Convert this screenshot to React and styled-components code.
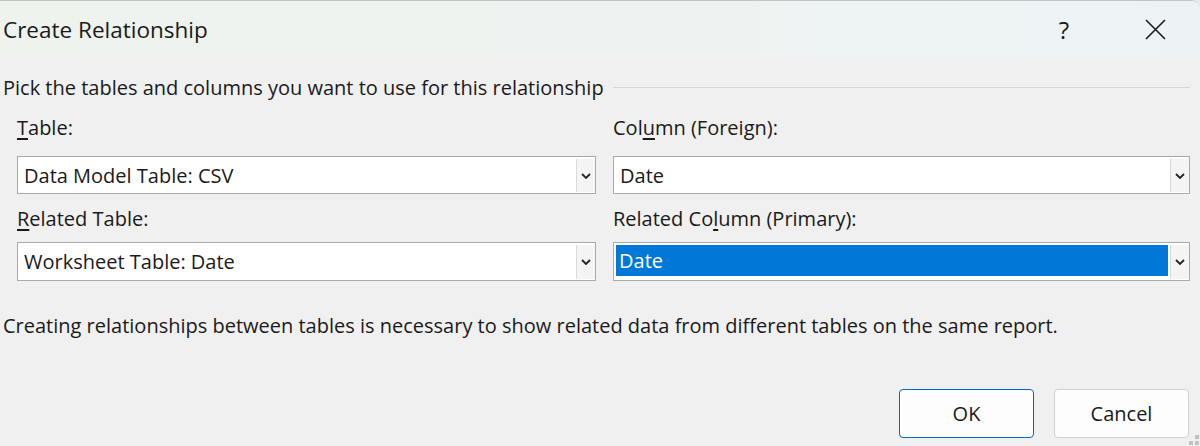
import React from 'react'
import styled, { createGlobalStyle } from 'styled-components';

const Global = createGlobalStyle`
    html, body {
        margin:0;
        padding:0;
        background:#e9e9e9;
    }
    body{
        font-family: 'Open Sans', 'Noto Sans', sans-serif;
        color:#1a1a1a;
    }
`;

const Dialog = styled.div`
    width:1200px;
    height:446px;
    box-sizing:border-box;
    background:#f0f0f0;
    border-top:1px solid #c4c4c4;
    border-top-right-radius:9px;
    overflow:hidden;
    display:flex;
    flex-direction:column;
`;

const TitleBar = styled.div`
    height:55px;
    flex:none;
    display:flex;
    align-items:center;
    background:linear-gradient(90deg, #eef3ee 0%, #eef3f1 50%, #edf3f5 100%);
`;

const Title = styled.div`
    flex:1;
    padding-left:3px;
    font-size:22.5px;
    color:#1b1b1b;
    margin-top:2px;
`;

const TitleButton = styled.div`
    width:${props => props.$w}px;
    margin-right:${props => props.$mr || 0}px;
    display:flex;
    justify-content:center;
    align-items:center;
    font-size:24px;
    color:#1b1b1b;
    margin-top:2px;
`;

const Body = styled.div`
    flex:1;
    display:flex;
    flex-direction:column;
    padding:17px 10px 8px 0;
`;

const Heading = styled.div`
    display:flex;
    align-items:center;
    padding-left:3px;
    font-size:20px;
    line-height:30px;
    span{
        white-space:nowrap;
    }
    &::after{
        content:'';
        flex:1;
        height:1px;
        background:#d6d6d6;
        margin-left:9px;
        margin-top:-2px;
    }
`;

const Fields = styled.div`
    display:grid;
    grid-template-columns:579px 577px;
    column-gap:17px;
    padding-left:17px;
    margin-top:11px;
`;

const Field = styled.div`
    display:flex;
    flex-direction:column;
`;

const Label = styled.div`
    font-size:20px;
    line-height:28px;
    margin-top:${props => props.$top}px;
    margin-bottom:${props => props.$bottom}px;
    u{
        text-underline-offset:3px;
    }
`;

const Combo = styled.div`
    height:${props => props.$h}px;
    box-sizing:border-box;
    background:#fff;
    border:1px solid #a9a9a9;
    display:flex;
    align-items:stretch;
    font-size:20px;
`;

const ComboValue = styled.div`
    flex:1;
    display:flex;
    align-items:center;
    padding-left:${props => props.$selected ? 3 : 6}px;
    margin:${props => props.$selected ? '2px 2px 4px 2px' : '0'};
    background:${props => props.$selected ? '#0078d7' : 'transparent'};
    color:${props => props.$selected ? '#fff' : '#1a1a1a'};
`;

const DropButton = styled.div`
    width:18px;
    flex:none;
    display:flex;
    align-items:center;
    justify-content:center;
    background:#f4f4f4;
    border-left:1px solid #dadada;
    margin:2px 0 1px 0;
`;

const Note = styled.div`
    padding-left:3px;
    margin-top:30px;
    font-size:20px;
    line-height:30px;
`;

const Footer = styled.div`
    margin-top:auto;
    display:flex;
    justify-content:flex-end;
    gap:20px;
    padding-right:1px;
    position:relative;
`;

const Button = styled.div`
    width:135px;
    height:49px;
    box-sizing:border-box;
    border-radius:4px;
    background:#fdfdfd;
    border:1px solid ${props => props.$primary ? '#0067c0' : '#d0d0d0'};
    display:flex;
    align-items:center;
    justify-content:center;
    font-size:20px;
    color:#1a1a1a;
`;

const Grip = styled.svg`
    position:absolute;
    right:-9px;
    bottom:-7px;
`;

function Chevron() {
    return (
        <svg width="10" height="6" viewBox="0 0 10 6">
            <path d="M1 1 L5 5 L9 1" fill="none" stroke="#222" strokeWidth="1.8" />
        </svg>
    )
}

function Select({ value, selected, h }) {
    return (
        <Combo $h={h}>
            <ComboValue $selected={selected}>{value}</ComboValue>
            <DropButton><Chevron /></DropButton>
        </Combo>
    )
}

export default function App() {
    return (
        <>
            <Global />
            <Dialog>
                <TitleBar>
                    <Title>Create Relationship</Title>
                    <TitleButton $w={22} $mr={35}>?</TitleButton>
                    <TitleButton $w={90}>
                        <svg width="21" height="21" viewBox="0 0 21 21">
                            <path d="M1 1 L20 20 M20 1 L1 20" stroke="#1b1b1b" strokeWidth="1.6" />
                        </svg>
                    </TitleButton>
                </TitleBar>
                <Body>
                    <Heading><span>Pick the tables and columns you want to use for this relationship</span></Heading>
                    <Fields>
                        <Field>
                            <Label $top={0} $bottom={14}><u>T</u>able:</Label>
                            <Select value="Data Model Table: CSV" h={38} />
                            <Label $top={11} $bottom={9}><u>R</u>elated Table:</Label>
                            <Select value="Worksheet Table: Date" h={39} />
                        </Field>
                        <Field>
                            <Label $top={0} $bottom={14}>Col<u>u</u>mn (Foreign):</Label>
                            <Select value="Date" h={38} />
                            <Label $top={11} $bottom={9}>Related Co<u>l</u>umn (Primary):</Label>
                            <Select value="Date" h={39} selected />
                        </Field>
                    </Fields>
                    <Note>Creating relationships between tables is necessary to show related data from different tables on the same report.</Note>
                    <Footer>
                        <Button $primary>OK</Button>
                        <Button>Cancel</Button>
                        <Grip width="10" height="10" viewBox="0 0 10 10">
                            <rect x="6" y="0" width="4" height="4" fill="#c2c2c2" />
                            <rect x="0" y="6" width="4" height="4" fill="#c2c2c2" />
                            <rect x="6" y="6" width="4" height="4" fill="#c2c2c2" />
                        </Grip>
                    </Footer>
                </Body>
            </Dialog>
        </>
    )
}
